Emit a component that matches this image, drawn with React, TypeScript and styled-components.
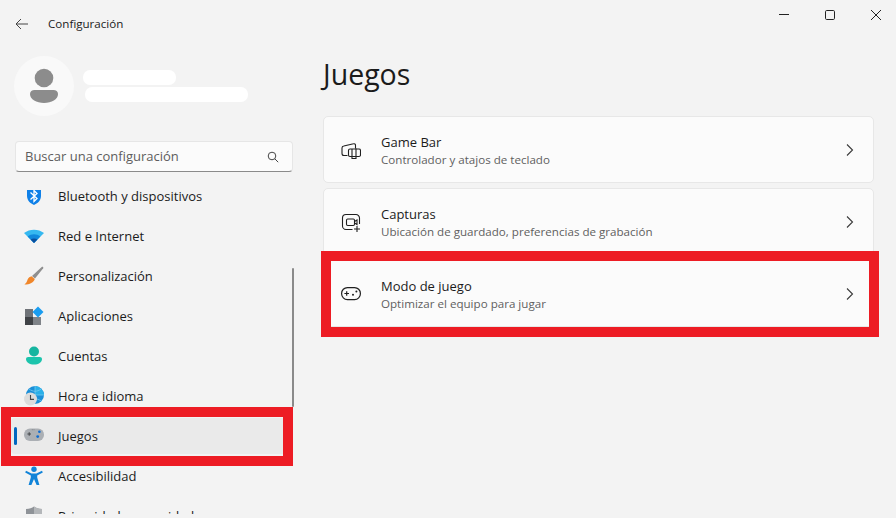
import React from 'react'
import styled, { createGlobalStyle } from 'styled-components'

const GlobalStyle = createGlobalStyle`
  html, body {
    margin: 0;
    padding: 0;
    background: #f3f3f3;
  }
  * {
    box-sizing: border-box;
  }
`

const BluetoothIcon = () => (
  <svg width="20" height="20" viewBox="0 0 20 20">
    <path d="M3 3.5 C6 3.5 8 2.5 10 1 C12 2.5 14 3.5 17 3.5 L17 10 C17 14.5 13.5 17.5 10 19 C6.5 17.5 3 14.5 3 10 Z" fill="#0f80e8" />
    <path d="M6.5 6.5 L13 12.5 L10 15.5 L10 4.5 L13 7.5 L6.5 13.5" fill="none" stroke="#fff" strokeWidth="1.3" />
  </svg>
)

const WifiIcon = () => (
  <svg width="20" height="20" viewBox="0 0 20 20">
    <path d="M0 7 C5.5 2.5 14.5 2.5 20 7 L10 17 Z" fill="#35b8f0" />
    <path d="M3.6 10.6 C7.4 7.6 12.6 7.6 16.4 10.6 L10 17 Z" fill="#1088dc" />
    <path d="M6.6 13.6 C8.6 12.2 11.4 12.2 13.4 13.6 L10 17 Z" fill="#0a4f9e" />
  </svg>
)

const BrushIcon = () => (
  <svg width="20" height="20" viewBox="0 0 20 20">
    <path d="M18 0.8 C19 0.6 19.6 1.4 19.2 2.2 L11 12.6 L8 10 Z" fill="#8f8f8f" />
    <path d="M7.5 10.3 L10.8 13 C9.8 16.5 6 18.6 0.4 18.6 C2.6 17 2.8 15.6 3.6 13.6 C4.4 11.8 6 10.6 7.5 10.3 Z" fill="#f0862a" />
  </svg>
)

const AppsIcon = () => (
  <svg width="20" height="20" viewBox="0 0 20 20">
    <rect x="1" y="3" width="8" height="8" fill="#6f7378" />
    <rect x="1" y="11" width="8" height="8" fill="#3f4246" />
    <rect x="9" y="11" width="8" height="8" fill="#7f8388" />
    <path d="M14 0.5 L19.5 6 L14 11.5 L8.5 6 Z" fill="#1a9df0" />
  </svg>
)

const UserIcon = () => (
  <svg width="20" height="20" viewBox="0 0 20 20">
    <circle cx="10" cy="5.5" r="5" fill="#16b5a0" />
    <path d="M2 13 C2 11.8 3 11 4.2 11 L15.8 11 C17 11 18 11.8 18 13 C18 16.5 14.5 18.5 10 18.5 C5.5 18.5 2 16.5 2 13 Z" fill="#1cc4ac" />
  </svg>
)

const ClockGlobeIcon = () => (
  <svg width="20" height="20" viewBox="0 0 20 20">
    <circle cx="11" cy="9" r="9" fill="#1b8fd8" />
    <path d="M11 0 A9 9 0 0 1 20 9 L11 9 Z" fill="#2bb0e8" />
    <path d="M2 9 H20 M11 0 V18 M5 3 C9 6 13 6 17 3 M5 15 C9 12 13 12 17 15" fill="none" stroke="#7fd0f2" strokeWidth="0.7" />
    <circle cx="6.5" cy="13" r="6.5" fill="#dcdcdc" />
    <path d="M6.5 9 V13.4 H10" fill="none" stroke="#45474a" strokeWidth="1.1" />
  </svg>
)

const ControllerIcon = () => (
  <svg width="20" height="20" viewBox="0 0 20 20">
    <rect x="0" y="2.5" width="20" height="12.5" rx="6" fill="#abafb4" />
    <path d="M3.4 8 H7 M5.2 6.2 V9.8" stroke="#3c3e42" strokeWidth="0.9" />
    <circle cx="13.7" cy="10.6" r="1.4" fill="#0f6cd0" />
    <circle cx="15.4" cy="5.8" r="1.3" fill="#0f6cd0" />
    <circle cx="8.2" cy="3.8" r="0.4" fill="#44474a" />
    <circle cx="10" cy="3.8" r="0.4" fill="#44474a" />
  </svg>
)

const AccessIcon = () => (
  <svg width="20" height="20" viewBox="0 0 20 20">
    <circle cx="10" cy="3.2" r="2.7" fill="#1083d8" />
    <path d="M2 4.8 L7.6 7.4 H12.4 L18 4.8 L18.8 6.6 L13.2 9.6 L13.2 11.4 L15.4 19 H12.6 L10 13 L7.4 19 H4.6 L6.8 11.4 L6.8 9.6 L1.2 6.6 Z" fill="#1083d8" />
  </svg>
)

const ShieldIcon = () => (
  <svg width="20" height="20" viewBox="0 0 20 20">
    <path d="M2 3 C5.5 3 8 2 10 0.6 C12 2 14.5 3 18 3 L18 10 C18 14.5 14 17.5 10 19 C6 17.5 2 14.5 2 10 Z" fill="#8f9398" />
    <path d="M10 0.6 C12 2 14.5 3 18 3 L18 10 L10 10 Z" fill="#b4b7ba" />
  </svg>
)

const navItems = [
  { label: 'Bluetooth y dispositivos', icon: <BluetoothIcon /> },
  { label: 'Red e Internet', icon: <WifiIcon /> },
  { label: 'Personalización', icon: <BrushIcon /> },
  { label: 'Aplicaciones', icon: <AppsIcon /> },
  { label: 'Cuentas', icon: <UserIcon /> },
  { label: 'Hora e idioma', icon: <ClockGlobeIcon /> },
  { label: 'Juegos', icon: <ControllerIcon />, active: true },
  { label: 'Accesibilidad', icon: <AccessIcon /> },
  { label: 'Privacidad y seguridad', icon: <ShieldIcon /> },
]

const cards = [
  {
    title: 'Game Bar',
    sub: 'Controlador y atajos de teclado',
    icon: (
      <svg width="20" height="20" viewBox="0 0 20 20" fill="none" stroke="#1f1f1f" strokeWidth="1.1">
        <path d="M6.5 15.5 H3 A2 2 0 0 1 1 13.5 L1 8 A2 2 0 0 1 2.8 6 L12.5 3.8 A1.5 1.5 0 0 1 14.5 5.3 V8.5" />
        <rect x="7.5" y="9" width="12" height="7.5" rx="1.5" />
        <path d="M11 9 V18.5 H15 V8.5" />
      </svg>
    ),
  },
  {
    title: 'Capturas',
    sub: 'Ubicación de guardado, preferencias de grabación',
    icon: (
      <svg width="20" height="20" viewBox="0 0 20 20" fill="none" stroke="#1f1f1f" strokeWidth="1.1">
        <path d="M11.5 17.5 H5 A3.5 3.5 0 0 1 1.5 14 V6 A3.5 3.5 0 0 1 5 2.5 H15 A3.5 3.5 0 0 1 18.5 6 V12" />
        <rect x="5.5" y="7" width="8" height="6.5" rx="1.2" />
        <path d="M13.5 9.5 L16 8 V12.5 L13.5 11" />
        <path d="M16 14 V20 M13 17 H19" />
      </svg>
    ),
  },
  {
    title: 'Modo de juego',
    sub: 'Optimizar el equipo para jugar',
    marked: true,
    icon: (
      <svg width="20" height="20" viewBox="0 0 20 20" fill="none" stroke="#1f1f1f" strokeWidth="1.2">
        <rect x="0.6" y="3.6" width="18.8" height="12" rx="5.8" />
        <path d="M3.4 9.5 H8 M5.7 7.2 V11.8" />
        <circle cx="12" cy="10.8" r="1" fill="#1f1f1f" stroke="none" />
        <circle cx="15.4" cy="7.4" r="1" fill="#1f1f1f" stroke="none" />
      </svg>
    ),
  },
]

const App: React.FC = () => {
  return (
    <Window>
      <GlobalStyle />
      <Sidebar>
        <TitleArea>
          <svg width="16" height="16" viewBox="0 0 16 16" fill="none" stroke="#444" strokeWidth="1">
            <path d="M14 8 H2 M7 3 L2 8 L7 13" />
          </svg>
          <AppTitle>Configuración</AppTitle>
        </TitleArea>

        <Profile>
          <Avatar>
            <svg width="30" height="36" viewBox="0 0 30 36" fill="#8c8c8c">
              <circle cx="15" cy="10" r="9.3" />
              <path d="M1 26 C1 23.5 3 22 5.5 22 H24.5 C27 22 29 23.5 29 26 C29 31.5 22.5 35 15 35 C7.5 35 1 31.5 1 26 Z" />
            </svg>
          </Avatar>
          <ProfileText>
            <NameBar />
            <MailBar />
          </ProfileText>
        </Profile>

        <SearchBox>
          <SearchLabel>Buscar una configuración</SearchLabel>
          <svg width="12" height="12" viewBox="0 0 12 12" fill="none" stroke="#444" strokeWidth="1">
            <circle cx="5" cy="5" r="3.8" />
            <path d="M7.8 7.8 L11.2 11.2" />
          </svg>
        </SearchBox>

        <NavClip>
          <NavList>
            {navItems.map((item) => (
              <NavItem key={item.label} $active={item.active}>
                {item.active && <AccentBar />}
                <NavIcon>{item.icon}</NavIcon>
                <NavLabel>{item.label}</NavLabel>
                {item.active && <NavMark />}
              </NavItem>
            ))}
          </NavList>
          <ScrollThumb />
        </NavClip>
      </Sidebar>

      <Main>
        <WindowControls>
          <svg width="10" height="10" viewBox="0 0 10 10" stroke="#222" strokeWidth="1">
            <path d="M0 4.5 H10" />
          </svg>
          <svg width="10" height="10" viewBox="0 0 10 10" fill="none" stroke="#222" strokeWidth="1">
            <rect x="0.5" y="0.5" width="9" height="9" rx="1.2" />
          </svg>
          <svg width="10" height="10" viewBox="0 0 10 10" stroke="#222" strokeWidth="1">
            <path d="M0 0 L10 10 M10 0 L0 10" />
          </svg>
        </WindowControls>

        <PageTitle>Juegos</PageTitle>

        <CardList>
          {cards.map((card) => (
            <Card key={card.title}>
              <CardIcon>{card.icon}</CardIcon>
              <CardText>
                <CardTitle>{card.title}</CardTitle>
                <CardSub>{card.sub}</CardSub>
              </CardText>
              <svg width="16" height="16" viewBox="0 0 16 16" fill="none" stroke="#3a3a3a" strokeWidth="1.1">
                <path d="M5 2.5 L10.5 8 L5 13.5" />
              </svg>
              {card.marked && <CardMark />}
            </Card>
          ))}
        </CardList>
      </Main>
    </Window>
  )
}

const Window = styled.div`
  width: 896px;
  height: 518px;
  display: flex;
  overflow: hidden;
  background: #f3f3f3;
  color: #1b1b1b;
  font-family: 'Open Sans', 'Noto Sans', sans-serif;
`

const Sidebar = styled.aside`
  width: 300px;
  height: 518px;
  flex-shrink: 0;
  display: flex;
  flex-direction: column;
`

const TitleArea = styled.div`
  height: 47px;
  padding-left: 14px;
  display: flex;
  align-items: center;
  gap: 18px;
`

const AppTitle = styled.span`
  font-size: 11.6px;
`

const Profile = styled.div`
  margin-top: 9px;
  padding-left: 14px;
  display: flex;
  align-items: center;
  height: 60px;
`

const Avatar = styled.div`
  width: 60px;
  height: 60px;
  border-radius: 50%;
  background: #f9f9f9;
  display: flex;
  align-items: center;
  justify-content: center;
`

const ProfileText = styled.div`
  margin-left: 9px;
  display: flex;
  flex-direction: column;
  gap: 2px;
`

const NameBar = styled.div`
  width: 93px;
  height: 15px;
  border-radius: 7px;
  background: #ffffff;
`

const MailBar = styled.div`
  width: 163px;
  height: 15px;
  margin-left: 2px;
  border-radius: 7px;
  background: #ffffff;
`

const SearchBox = styled.div`
  margin: 25px 0 0 15px;
  width: 278px;
  height: 31px;
  padding: 0 13px 0 9px;
  display: flex;
  align-items: center;
  justify-content: space-between;
  background: #fbfbfb;
  border: 1px solid #e6e6e6;
  border-bottom-color: #8a8a8a;
  border-radius: 4px;
`

const SearchLabel = styled.span`
  padding-bottom: 2px;
  font-size: 13px;
  color: #5d5d5d;
`

const NavClip = styled.div`
  position: relative;
  margin: 18px 0 4px;
  flex: 1;
  overflow: hidden;
`

const NavList = styled.ul`
  list-style: none;
  margin: -12px 0 0;
  padding: 0 10px 0 11px;
  display: flex;
  flex-direction: column;
  gap: 4px;
`

const NavItem = styled.li<{ $active?: boolean }>`
  position: relative;
  height: 36px;
  padding-left: 13px;
  display: flex;
  align-items: center;
  border-radius: 4px;
  background: ${(props) => (props.$active ? '#eaeaea' : 'transparent')};
`

const AccentBar = styled.span`
  position: absolute;
  left: 3px;
  top: 9px;
  width: 3px;
  height: 18px;
  border-radius: 2px;
  background: #0067c0;
`

const NavIcon = styled.span`
  width: 20px;
  height: 20px;
  display: flex;
`

const NavLabel = styled.span`
  margin-left: 14px;
  font-size: 13px;
`

const NavMark = styled.span`
  position: absolute;
  top: -11px;
  left: -10px;
  right: -3px;
  bottom: -12px;
  border: 10px solid #ed1c24;
  pointer-events: none;
`

const ScrollThumb = styled.div`
  position: absolute;
  left: 292px;
  top: 78px;
  width: 2px;
  height: 139px;
  border-radius: 1px;
  background: #8a8a8a;
`

const Main = styled.main`
  position: relative;
  flex: 1;
  padding: 0 22px 0 23px;
`

const WindowControls = styled.div`
  position: absolute;
  top: 10px;
  right: 15px;
  display: flex;
  gap: 36px;
`

const PageTitle = styled.h1`
  margin: 53px 0 20px;
  font-size: 28.5px;
  line-height: 43px;
  font-weight: 500;
`

const CardList = styled.div`
  display: flex;
  flex-direction: column;
  gap: 5px;
`

const Card = styled.div`
  position: relative;
  height: 67px;
  padding: 0 15px 0 17px;
  display: flex;
  align-items: center;
  background: #fbfbfb;
  border: 1px solid #e7e7e7;
  border-radius: 5px;
`

const CardIcon = styled.span`
  width: 20px;
  height: 20px;
  display: flex;
`

const CardText = styled.div`
  flex: 1;
  margin-left: 20px;
  padding-top: 1px;
  display: flex;
  flex-direction: column;
  gap: 1px;
`

const CardTitle = styled.span`
  font-size: 13px;
  line-height: 18px;
`

const CardSub = styled.span`
  font-size: 11.6px;
  line-height: 16px;
  color: #5f5f5f;
`

const CardMark = styled.span`
  position: absolute;
  top: -10px;
  left: -3px;
  right: -6px;
  bottom: -11px;
  border: 10px solid #ed1c24;
  pointer-events: none;
`

export default App
